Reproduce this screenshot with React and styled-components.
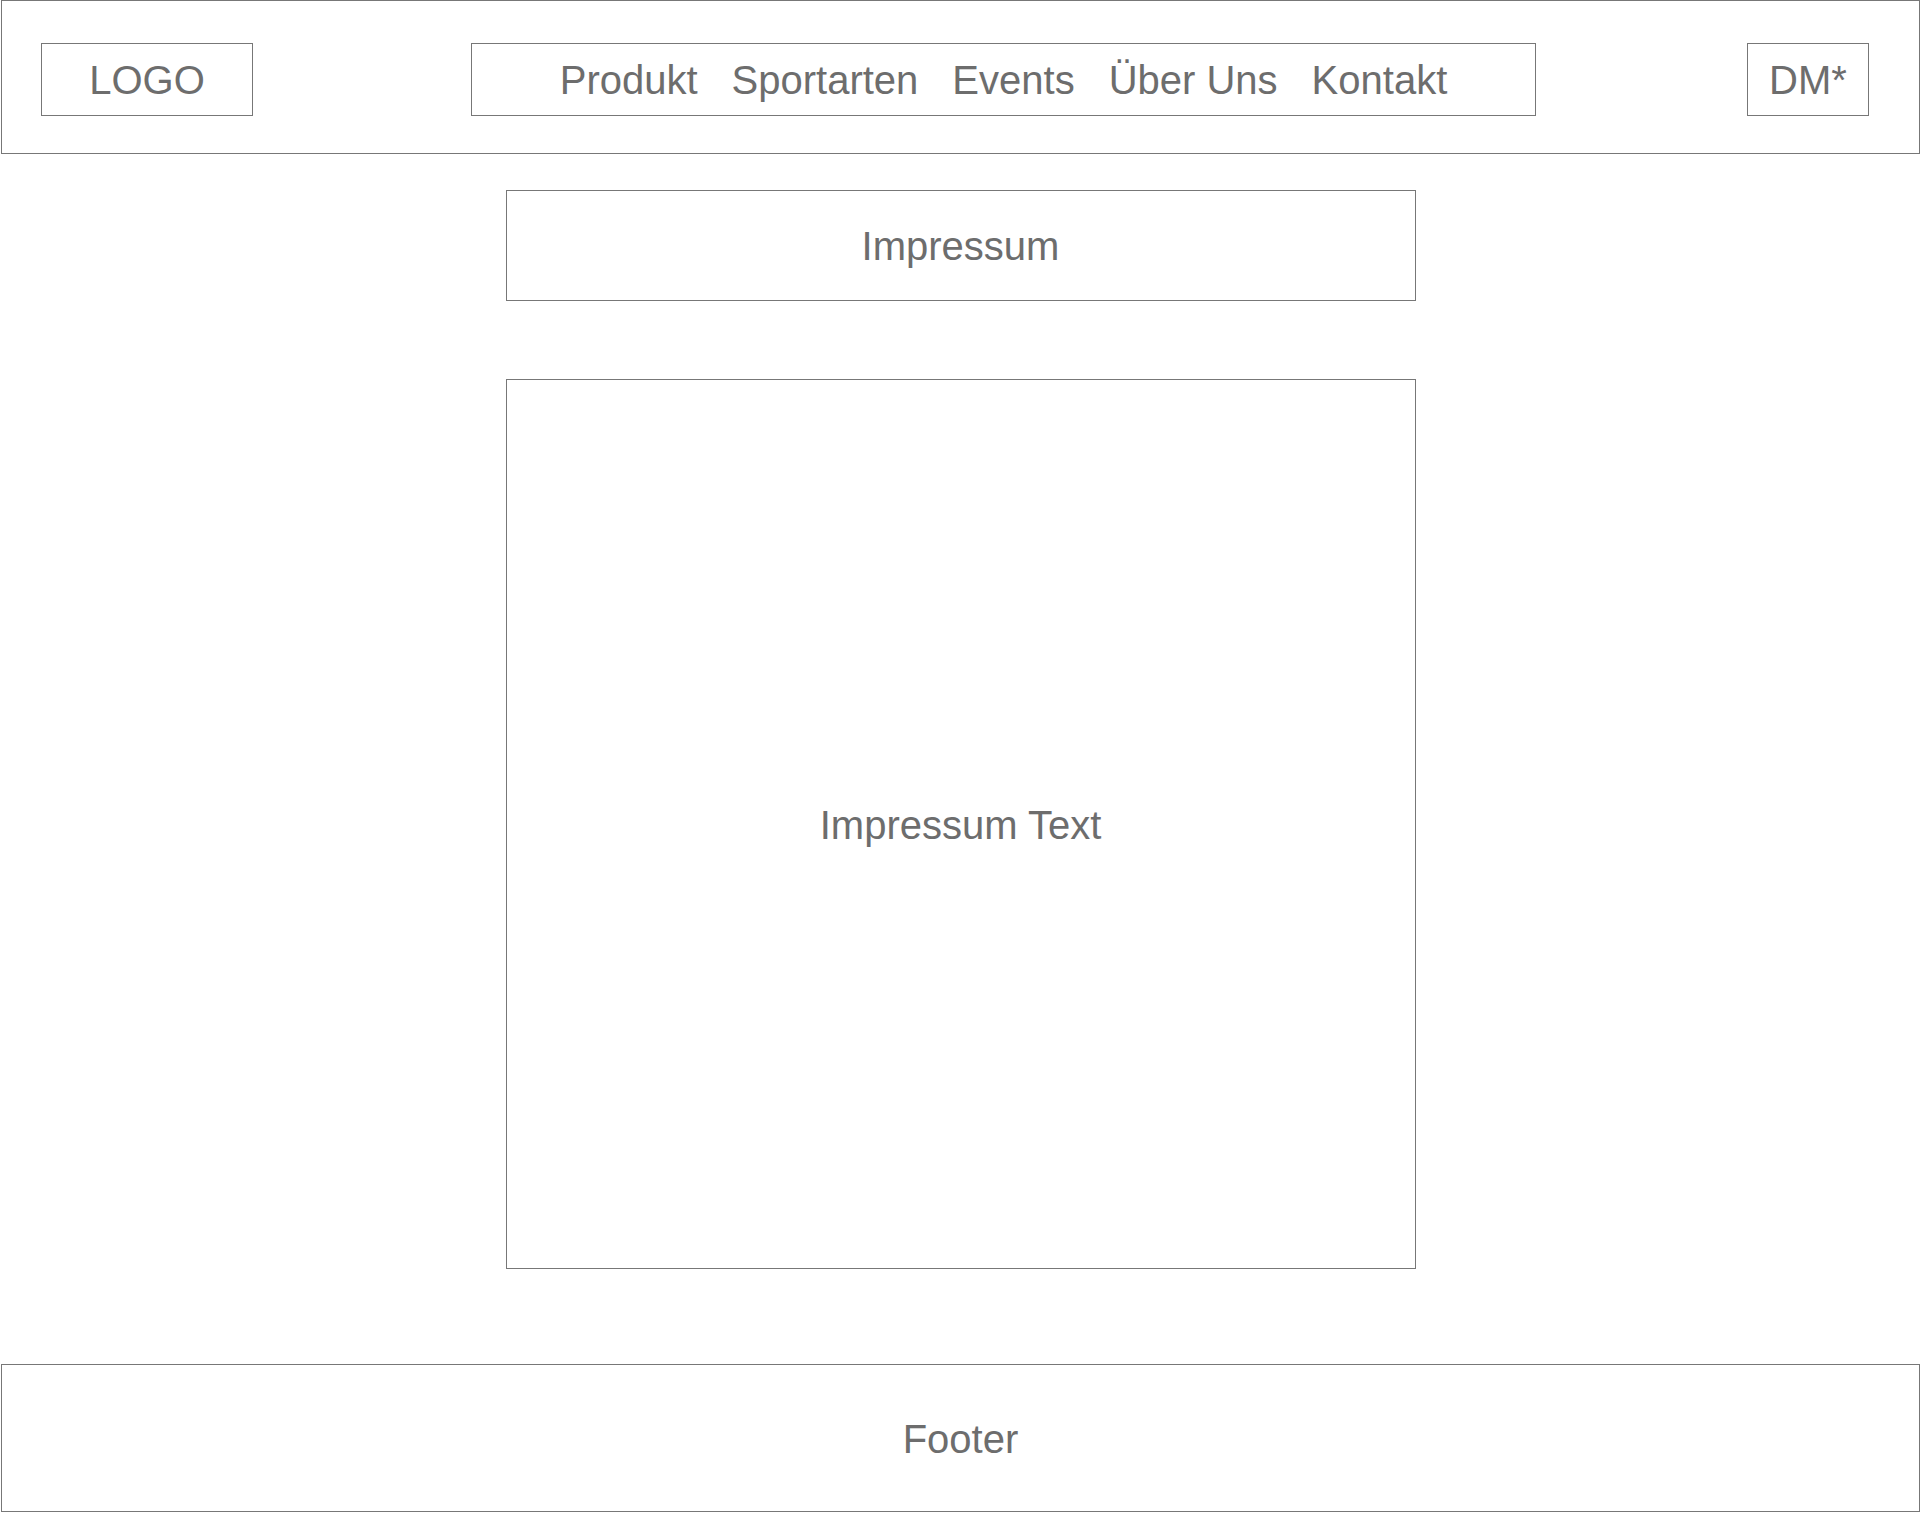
import React from "react";
import styled, { createGlobalStyle } from "styled-components";

const GlobalStyle = createGlobalStyle`
  * {
    box-sizing: border-box;
  }
  body {
    margin: 0;
    background: #ffffff;
    font-family: "Liberation Sans", Arial, Helvetica, sans-serif;
    color: #6d6d6d;
  }
`;

const Page = styled.div`
  display: flex;
  flex-direction: column;
  width: 100%;
`;

const Header = styled.header`
  display: flex;
  align-items: flex-start;
  height: 154px;
  margin: 0 1px;
  padding: 42px 0 0 39px;
  border: 1px solid #777777;
`;

const Box = styled.div`
  display: flex;
  align-items: center;
  justify-content: center;
  width: ${(p) => p.$width}px;
  height: ${(p) => p.$height || 73}px;
  margin-left: ${(p) => p.$left || 0}px;
  padding-top: 2px;
  border: 1px solid #777777;
  font-size: 40px;
  color: #6d6d6d;
`;

const NavList = styled.ul`
  display: flex;
  align-items: center;
  gap: 34px;
  margin: 0;
  padding: 0;
  list-style: none;
`;

const NavItem = styled.li`
  cursor: pointer;
  white-space: nowrap;
`;

const Main = styled.main`
  display: flex;
  flex-direction: column;
  align-items: center;
`;

const Panel = styled.section`
  display: flex;
  align-items: center;
  justify-content: center;
  width: 910px;
  height: ${(p) => p.$height}px;
  margin-top: ${(p) => p.$top}px;
  padding-top: 2px;
  border: 1px solid #777777;
  font-size: 40px;
`;

const Footer = styled.footer`
  display: flex;
  align-items: center;
  justify-content: center;
  height: 148px;
  margin: 95px 1px 0;
  padding-top: 2px;
  border: 1px solid #777777;
  font-size: 40px;
`;

const links = ["Produkt", "Sportarten", "Events", "Über Uns", "Kontakt"];

const App = () => {
  return (
    <Page>
      <GlobalStyle />
      <Header>
        <Box $width={212}>LOGO</Box>
        <Box $width={1065} $left={218}>
          <NavList>
            {links.map((l) => (
              <NavItem key={l}>{l}</NavItem>
            ))}
          </NavList>
        </Box>
        <Box $width={122} $left={211}>DM*</Box>
      </Header>
      <Main>
        <Panel $height={111} $top={36}>Impressum</Panel>
        <Panel $height={890} $top={78}>Impressum Text</Panel>
      </Main>
      <Footer>Footer</Footer>
    </Page>
  );
};

export default App;
